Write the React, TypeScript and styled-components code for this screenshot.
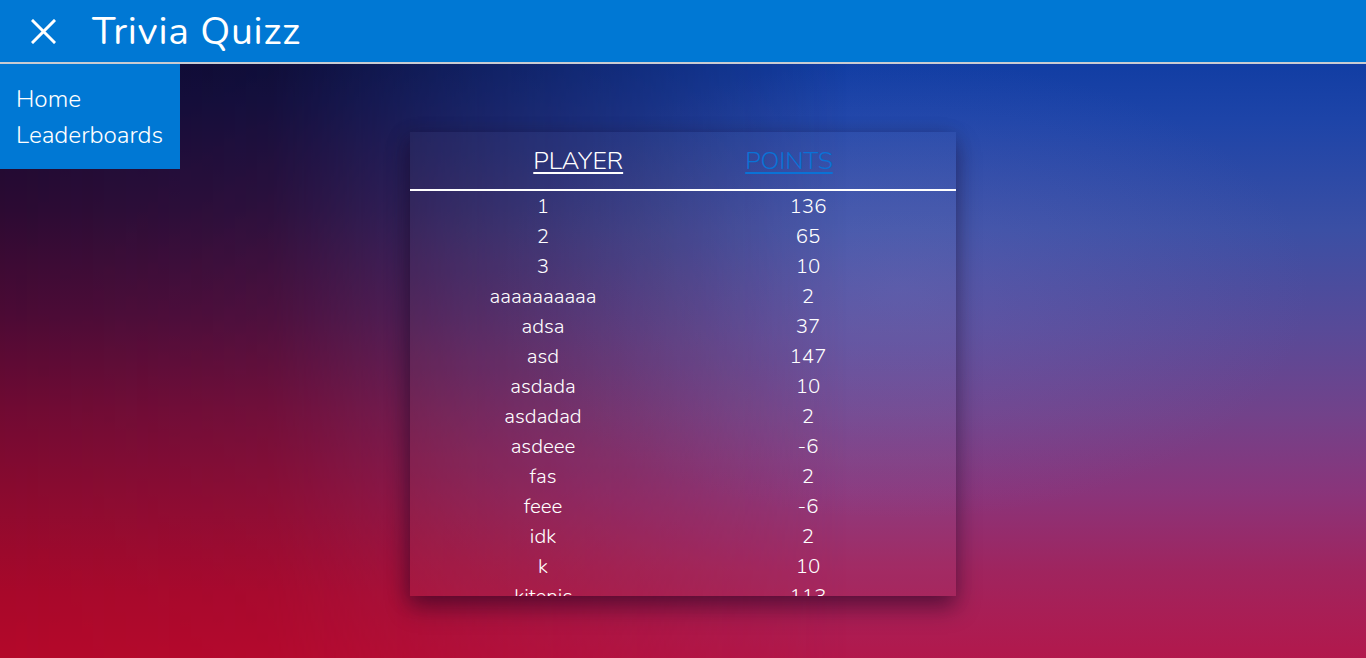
import React from "react";
import styled, { createGlobalStyle } from "styled-components";

const GlobalStyle = createGlobalStyle`
  html, body { margin: 0; padding: 0; height: 100%; }
  body { font-family: "Nunito", "Lato", "Open Sans", sans-serif; overflow: hidden; }
  #root { height: 100%; }
`;

const Page = styled.div`
  position: relative;
  width: 100%;
  height: 658px;
  display: flex;
  flex-direction: column;
  isolation: isolate;
  background:
    radial-gradient(ellipse 30% 35% at 66% 44%, rgba(120, 120, 200, 0.26) 0%, rgba(120, 120, 200, 0) 100%),
    linear-gradient(180deg, #04369e 0%, #1d44a8 18%, #3b4fa4 35%, #584a98 50%, #72428a 63%, #8a347a 75%, #a0245e 87%, #b2184c 100%);

  &::before {
    content: "";
    position: absolute;
    inset: 0;
    z-index: -1;
    background: linear-gradient(180deg, #080828 0%, #140a32 15%, #2c0a32 32%, #4c0a34 48%, #700a32 62%, #900a2e 78%, #a8082a 90%, #b4082a 100%);
    -webkit-mask-image: linear-gradient(90deg, #000 0%, rgba(0,0,0,0.9) 20%, rgba(0,0,0,0.55) 35%, rgba(0,0,0,0) 62%);
    mask-image: linear-gradient(90deg, #000 0%, rgba(0,0,0,0.9) 20%, rgba(0,0,0,0.55) 35%, rgba(0,0,0,0) 62%);
  }
`;

const TopBar = styled.header`
  height: 62px;
  background: #0078d4;
  border-bottom: 2px solid #c9ccd2;
  display: flex;
  align-items: center;
  padding-left: 31px;
  gap: 36px;
  color: #fff;
  flex-shrink: 0;
`;

const CloseButton = styled.button`
  background: none;
  border: none;
  padding: 0;
  width: 25px;
  height: 25px;
  display: flex;
  color: #fff;
  cursor: pointer;
`;

const Title = styled.h1`
  margin: 0;
  font-size: 39px;
  font-weight: 400;
  letter-spacing: 0.7px;
  line-height: 1;
`;

const Drawer = styled.nav`
  position: absolute;
  top: 64px;
  left: 0;
  width: 180px;
  background: #0078d4;
  padding: 17px 0 16px 16px;
  box-sizing: border-box;
  display: flex;
  flex-direction: column;
  z-index: 2;
`;

const DrawerLink = styled.a`
  color: #fff;
  font-size: 24.3px;
  font-weight: 300;
  line-height: 36px;
  text-decoration: none;
`;

const Main = styled.main`
  flex: 1;
  display: flex;
  justify-content: center;
  padding-top: 68px;
`;

const Card = styled.section`
  width: 546px;
  height: 464px;
  background: rgba(255, 255, 255, 0.03);
  box-shadow: 0 12px 22px rgba(20, 0, 30, 0.4), -4px 4px 18px rgba(20, 0, 30, 0.22);
  display: flex;
  flex-direction: column;
  overflow: hidden;
`;

const HeadRow = styled.div`
  height: 57px;
  display: flex;
  justify-content: center;
  align-items: center;
  gap: 122px;
  border-bottom: 2px solid #fff;
  flex-shrink: 0;
`;

const HeadLink = styled.a<{ $active?: boolean }>`
  font-size: 24.8px;
  font-weight: 300;
  text-decoration: underline;
  text-underline-offset: 3px;
  text-decoration-thickness: 2px;
  color: ${(p) => (p.$active ? "#0a72d6" : "#fff")};
  cursor: pointer;
  text-transform: uppercase;
`;

const Body = styled.div`
  flex: 1;
  overflow: hidden;
`;

const Row = styled.div`
  display: grid;
  grid-template-columns: 266px 264px;
  height: 30px;
  align-items: center;
  color: #fff;
  font-size: 20.5px;
  font-weight: 300;
`;

const Cell = styled.span`
  text-align: center;
`;

const data: [string, number][] = [
  ["1", 136],
  ["2", 65],
  ["3", 10],
  ["aaaaaaaaaa", 2],
  ["adsa", 37],
  ["asd", 147],
  ["asdada", 10],
  ["asdadad", 2],
  ["asdeee", -6],
  ["fas", 2],
  ["feee", -6],
  ["idk", 2],
  ["k", 10],
  ["kitenic", 113],
];

export default function App() {
  return (
    <>
      <GlobalStyle />
      <Page>
        <TopBar>
          <CloseButton aria-label="close menu">
            <svg width="25" height="25" viewBox="0 0 25 25">
              <path d="M2 2 L23 23 M23 2 L2 23" stroke="#fff" strokeWidth="3" strokeLinecap="square" />
            </svg>
          </CloseButton>
          <Title>Trivia Quizz</Title>
        </TopBar>
        <Drawer>
          <DrawerLink href="#">Home</DrawerLink>
          <DrawerLink href="#">Leaderboards</DrawerLink>
        </Drawer>
        <Main>
          <Card>
            <HeadRow>
              <HeadLink>Player</HeadLink>
              <HeadLink $active>Points</HeadLink>
            </HeadRow>
            <Body>
              {data.map(([name, pts]) => (
                <Row key={name}>
                  <Cell>{name}</Cell>
                  <Cell>{pts}</Cell>
                </Row>
              ))}
            </Body>
          </Card>
        </Main>
      </Page>
    </>
  );
}
